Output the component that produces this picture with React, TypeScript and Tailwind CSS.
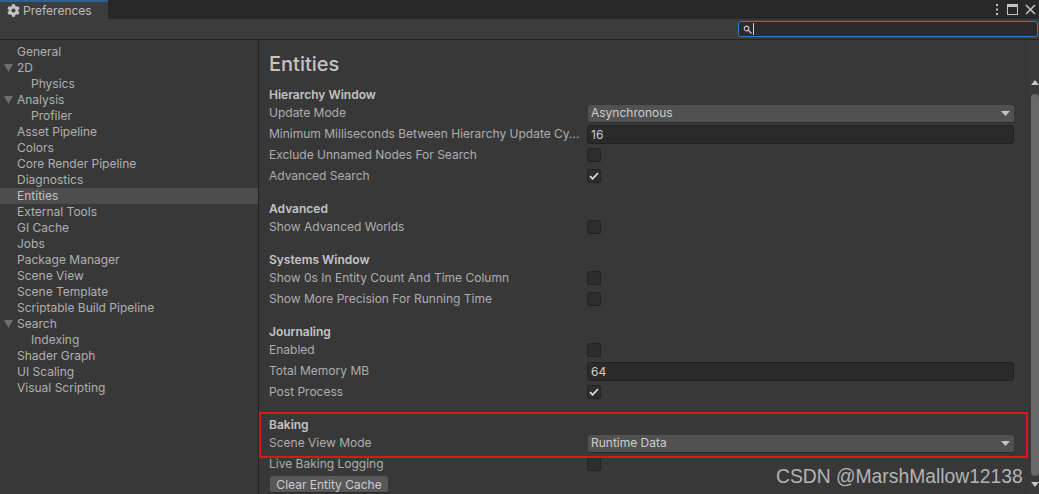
import { FaCog } from "react-icons/fa";

const navItems = [
  { label: "General" },
  { label: "2D", open: true },
  { label: "Physics", child: true },
  { label: "Analysis", open: true },
  { label: "Profiler", child: true },
  { label: "Asset Pipeline" },
  { label: "Colors" },
  { label: "Core Render Pipeline" },
  { label: "Diagnostics" },
  { label: "Entities", active: true },
  { label: "External Tools" },
  { label: "GI Cache" },
  { label: "Jobs" },
  { label: "Package Manager" },
  { label: "Scene View" },
  { label: "Scene Template" },
  { label: "Scriptable Build Pipeline" },
  { label: "Search", open: true },
  { label: "Indexing", child: true },
  { label: "Shader Graph" },
  { label: "UI Scaling" },
  { label: "Visual Scripting" },
];

function Row({ label, children }: { label: string; children?: React.ReactNode }) {
  return (
    <div className="flex h-[21px] items-center">
      <div className="mb-[2px] w-[318px] shrink-0 whitespace-nowrap text-[#aeaeae]">{label}</div>
      <div className="flex min-w-0 flex-1 items-center">{children}</div>
    </div>
  );
}

function Heading({ children }: { children: React.ReactNode }) {
  return <div className="flex h-[18px] items-center pt-[2px] font-semibold text-[#c4c4c4]">{children}</div>;
}

function Dropdown({ value }: { value: string }) {
  return (
    <div className="ml-[1px] flex h-[18px] w-full items-center justify-between rounded-[3px] border-b border-[#2a2a2a] bg-[#515151] pl-[3px] pr-[4px] text-[#cccccc]">
      <span>{value}</span>
      <svg width="9" height="5" viewBox="0 0 9 5">
        <path d="M0 0h9L4.5 5z" fill="#c4c4c4" />
      </svg>
    </div>
  );
}

function NumberField({ value }: { value: string }) {
  return (
    <div className="flex h-[19px] w-full items-center rounded-[3px] border border-[#212121] bg-[#2a2a2a] pl-[3px] text-[#cccccc]">
      {value}
    </div>
  );
}

function Check({ checked }: { checked?: boolean }) {
  return (
    <div className="mb-[2px] flex size-[14px] items-center justify-center rounded-[2px] border border-[#232323] bg-[#2d2d2d]">
      {checked && (
        <svg width="10" height="8" viewBox="0 0 10 8" fill="none">
          <path d="M1 4.2 3.6 6.8 9 1" stroke="#e0e0e0" strokeWidth="1.7" />
        </svg>
      )}
    </div>
  );
}

export default function App() {
  return (
    <div className="relative flex h-[494px] w-[1039px] flex-col overflow-hidden bg-[#383838] font-['Inter',sans-serif] text-[12px] leading-[16px]">
      {/* Title bar */}
      <div className="flex h-[19px] shrink-0 items-stretch justify-between bg-[#282828]">
        <div className="flex w-[108px] items-center gap-[3px] border-t-2 border-[#2f5f8f] bg-[#3c3c3c] pl-[7px] text-[#bdbdbd]">
          <FaCog size={13} color="#c4c4c4" />
          <span>Preferences</span>
        </div>
        <div className="flex items-center gap-[5px] pr-[3px]">
          <svg width="4" height="11" viewBox="0 0 4 11" fill="#c4c4c4">
            <rect x="1" y="0" width="2" height="2" />
            <rect x="1" y="4.5" width="2" height="2" />
            <rect x="1" y="9" width="2" height="2" />
          </svg>
          <svg width="11" height="11" viewBox="0 0 11 11" fill="none" className="ml-[3px]">
            <rect x="0.5" y="0.5" width="10" height="10" stroke="#c4c4c4" />
            <rect x="0" y="0" width="11" height="3" fill="#c4c4c4" />
          </svg>
          <svg width="11" height="11" viewBox="0 0 11 11" fill="none" className="ml-[2px]">
            <path d="M1 1l9 9M10 1l-9 9" stroke="#c4c4c4" strokeWidth="1.5" />
          </svg>
        </div>
      </div>

      {/* Toolbar */}
      <div className="flex h-[21px] shrink-0 items-center justify-end border-b border-[#232323] bg-[#3c3c3c] pr-[1px]">
        <div className="flex h-[16px] w-[300px] items-center rounded-[3px] border border-[#3a79bb] bg-[#2a2a2a] pl-[4px]">
          <svg width="9" height="9" viewBox="0 0 9 9" fill="none">
            <circle cx="3.5" cy="3.5" r="2.3" stroke="#c4c4c4" strokeWidth="1.2" />
            <path d="M5.3 5.3 8.5 8.5" stroke="#c4c4c4" strokeWidth="1.3" />
          </svg>
          <div className="ml-[1px] h-[12px] w-px bg-[#d2d2d2]" />
        </div>
      </div>

      <div className="flex min-h-0 flex-1">
        {/* Sidebar */}
        <div className="w-[259px] shrink-0 border-r border-[#232323] pt-[4px]">
          {navItems.map((item) => (
            <div
              key={item.label}
              className={`relative flex h-[16px] items-center ${item.child ? "pl-[31px]" : "pl-[17px]"} ${item.active ? "bg-[#4d4d4d] text-[#c0c0c0]" : "text-[#b0b0b0]"}`}
            >
              {item.open && (
                <svg width="9" height="8" viewBox="0 0 9 8" className="absolute left-[4px] top-[4px]">
                  <path d="M0 0h9L4.5 8z" fill="#6e6e6e" />
                </svg>
              )}
              {item.label}
            </div>
          ))}
        </div>

        {/* Content */}
        <div className="flex min-w-0 flex-1">
          <div className="min-w-0 flex-1 pl-[10px] pr-[16px]">
            <div className="flex h-[45px] items-center pt-[2px] text-[20px] font-medium text-[#c4c4c4]">Entities</div>

            <Heading>Hierarchy Window</Heading>
            <Row label="Update Mode"><Dropdown value="Asynchronous" /></Row>
            <Row label="Minimum Milliseconds Between Hierarchy Update Cy..."><NumberField value="16" /></Row>
            <Row label="Exclude Unnamed Nodes For Search"><Check /></Row>
            <Row label="Advanced Search"><Check checked /></Row>

            <div className="mt-[12px]"><Heading>Advanced</Heading></div>
            <Row label="Show Advanced Worlds"><Check /></Row>

            <div className="mt-[12px]"><Heading>Systems Window</Heading></div>
            <Row label="Show 0s In Entity Count And Time Column"><Check /></Row>
            <Row label="Show More Precision For Running Time"><Check /></Row>

            <div className="mt-[12px]"><Heading>Journaling</Heading></div>
            <Row label="Enabled"><Check /></Row>
            <Row label="Total Memory MB"><NumberField value="64" /></Row>
            <Row label="Post Process"><Check checked /></Row>

            <div className="mt-[12px]"><Heading>Baking</Heading></div>
            <Row label="Scene View Mode"><Dropdown value="Runtime Data" /></Row>
            <Row label="Live Baking Logging"><Check /></Row>
            <button className="ml-[1px] mt-[1px] flex h-[17px] w-[118px] items-center justify-center rounded-[3px] border-b border-[#2a2a2a] bg-[#585858] pt-[1px] text-[#cccccc]">
              Clear Entity Cache
            </button>
          </div>

          {/* Scrollbar */}
          <div className="flex w-[9px] shrink-0 flex-col items-center bg-[#3a3a3a] pt-[40px]">
            <svg width="8" height="5" viewBox="0 0 8 5" className="mb-[9px]">
              <path d="M0 5h8L4 0z" fill="#c4c4c4" />
            </svg>
            <div className="h-[382px] w-[8px] rounded-[4px] bg-[#686868]" />
            <svg width="8" height="5" viewBox="0 0 8 5" className="mt-[6px]">
              <path d="M0 0h8L4 5z" fill="#c4c4c4" />
            </svg>
          </div>
        </div>
      </div>

      {/* Red highlight annotation */}
      <div className="absolute left-[259px] top-[412px] h-[46px] w-[769px] border-2 border-[#e0141f]" />

      {/* Watermark */}
      <div className="absolute left-[776px] top-[466px] font-['Liberation_Sans',sans-serif] text-[19.3px] leading-[22px] text-[#b4b4b4]">
        CSDN @MarshMallow12138
      </div>
    </div>
  );
}
